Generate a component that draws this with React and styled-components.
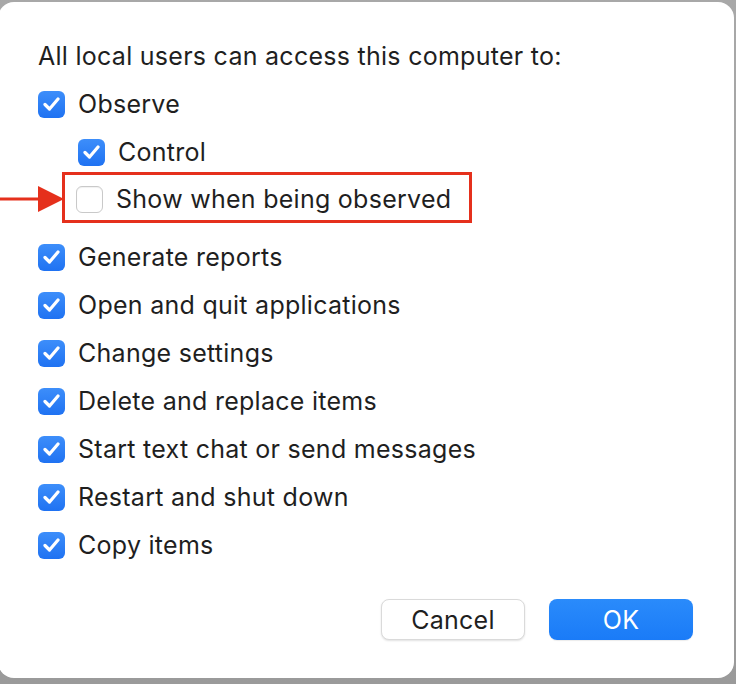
import React, { useState } from 'react';
import styled, { createGlobalStyle } from 'styled-components';

const GlobalStyle = createGlobalStyle`
  html, body {
    margin: 0;
    padding: 0;
    background: #9c9c9c;
    overflow: hidden;
  }
  body {
    font-family: Inter, "Liberation Sans", Arial, sans-serif;
  }
`;

const Page = styled.div`
  width: 736px;
  height: 684px;
  background: linear-gradient(180deg, #a8a8a8 0%, #9a9a9a 100%);
  overflow: hidden;
`;

const Dialog = styled.div`
  box-sizing: border-box;
  width: 736px;
  height: 676px;
  margin: 2px 0 0 -2px;
  padding: 30px 41px 0 40px;
  background: #fff;
  border-radius: 16px;
  display: flex;
  flex-direction: column;
  color: #1f1f1f;
  font-size: 25px;
  letter-spacing: 0.27px;
`;

const Heading = styled.div`
  line-height: 48px;
  height: 48px;
  white-space: nowrap;
`;

const Row = styled.label`
  display: flex;
  align-items: center;
  gap: 13px;
  height: ${p => (p.$tight ? '45px' : '48px')};
  padding-left: ${p => (p.$indent ? '40px' : '0')};
  white-space: nowrap;
  cursor: default;
`;

const Highlight = styled.div`
  position: relative;
  box-sizing: border-box;
  display: flex;
  align-items: center;
  width: 410px;
  height: 51px;
  margin: -4px 0 10px 24px;
  padding: 3px 0 0 11px;
  border: 3px solid #e5301c;
`;

const Arrow = styled.svg`
  position: absolute;
  left: -67px;
  top: 9px;
`;

const Box = styled.span`
  box-sizing: border-box;
  flex: none;
  width: 27px;
  height: 27px;
  border-radius: 6px;
  display: flex;
  align-items: center;
  justify-content: center;
  background: ${p => (p.$on ? 'linear-gradient(180deg, #3d8efa 0%, #1f72f2 100%)' : '#fff')};
  border: ${p => (p.$on ? 'none' : '1px solid #c9c9c9')};
  box-shadow: ${p => (p.$on ? 'none' : 'inset 0 1px 1px rgba(0,0,0,0.06)')};
`;

const Footer = styled.div`
  display: flex;
  justify-content: flex-end;
  gap: 24px;
  margin-top: 30px;
`;

const Button = styled.button`
  box-sizing: border-box;
  width: 144px;
  height: 41px;
  border-radius: 8px;
  font-family: Inter, "Liberation Sans", Arial, sans-serif;
  font-size: 25px;
  letter-spacing: 0.27px;
  padding: 0;
  cursor: pointer;
  color: ${p => (p.$primary ? '#fff' : '#1f1f1f')};
  background: ${p => (p.$primary ? 'linear-gradient(180deg, #2a8bfb 0%, #1a7bf7 100%)' : '#fff')};
  border: ${p => (p.$primary ? 'none' : '1px solid #dadada')};
  box-shadow: ${p => (p.$primary ? '0 1px 1px rgba(0,0,0,0.08)' : '0 1px 2px rgba(0,0,0,0.12)')};
`;

function Check() {
  return (
    <svg width="17" height="14" viewBox="0 0 17 14">
      <path d="M2 7.5 L6.5 12 L15 2" fill="none" stroke="#fff" strokeWidth="3.2" strokeLinecap="round" strokeLinejoin="round" />
    </svg>
  );
}

function Checkbox({ on, onToggle }) {
  return (
    <Box $on={on} onClick={onToggle}>
      {on && <Check />}
    </Box>
  );
}

const items = [
  'Generate reports',
  'Open and quit applications',
  'Change settings',
  'Delete and replace items',
  'Start text chat or send messages',
  'Restart and shut down',
  'Copy items',
];

export default function App() {
  const [observe, setObserve] = useState(true);
  const [control, setControl] = useState(true);
  const [show, setShow] = useState(false);
  const [checks, setChecks] = useState(items.map(() => true));

  const toggle = (i) => setChecks(checks.map((c, j) => (j === i ? !c : c)));

  return (
    <Page>
      <GlobalStyle />
      <Dialog>
        <Heading>All local users can access this computer to:</Heading>
        <Row>
          <Checkbox on={observe} onToggle={() => setObserve(!observe)} />
          Observe
        </Row>
        <Row $indent>
          <Checkbox on={control} onToggle={() => setControl(!control)} />
          Control
        </Row>
        <Highlight>
          <Arrow width="66" height="30" viewBox="0 0 66 30">
            <line x1="0" y1="15" x2="44" y2="15" stroke="#e5301c" strokeWidth="3" />
            <polygon points="40,2 66,15 40,28" fill="#e5301c" />
          </Arrow>
          <Row $tight>
            <Checkbox on={show} onToggle={() => setShow(!show)} />
            Show when being observed
          </Row>
        </Highlight>
        {items.map((label, i) => (
          <Row key={label}>
            <Checkbox on={checks[i]} onToggle={() => toggle(i)} />
            {label}
          </Row>
        ))}
        <Footer>
          <Button>Cancel</Button>
          <Button $primary>OK</Button>
        </Footer>
      </Dialog>
    </Page>
  );
}
